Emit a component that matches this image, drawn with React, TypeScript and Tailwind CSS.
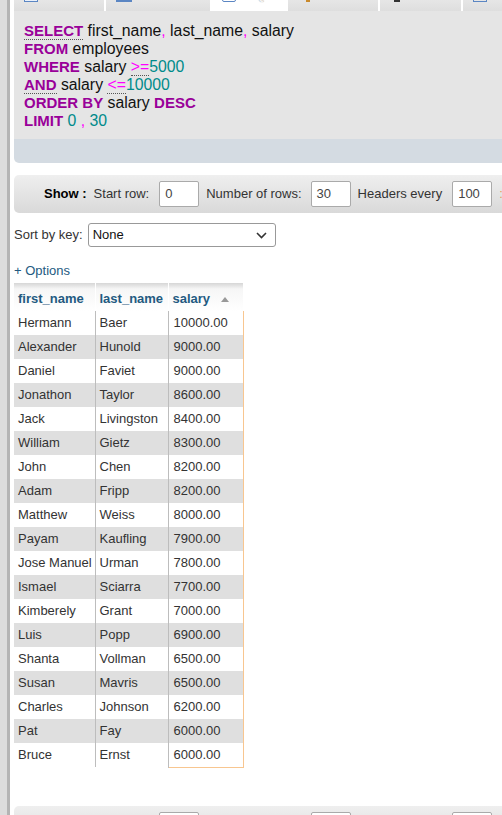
import React from "react";

const rows: [string, string, string][] = [
  ["Hermann", "Baer", "10000.00"],
  ["Alexander", "Hunold", "9000.00"],
  ["Daniel", "Faviet", "9000.00"],
  ["Jonathon", "Taylor", "8600.00"],
  ["Jack", "Livingston", "8400.00"],
  ["William", "Gietz", "8300.00"],
  ["John", "Chen", "8200.00"],
  ["Adam", "Fripp", "8200.00"],
  ["Matthew", "Weiss", "8000.00"],
  ["Payam", "Kaufling", "7900.00"],
  ["Jose Manuel", "Urman", "7800.00"],
  ["Ismael", "Sciarra", "7700.00"],
  ["Kimberely", "Grant", "7000.00"],
  ["Luis", "Popp", "6900.00"],
  ["Shanta", "Vollman", "6500.00"],
  ["Susan", "Mavris", "6500.00"],
  ["Charles", "Johnson", "6200.00"],
  ["Pat", "Fay", "6000.00"],
  ["Bruce", "Ernst", "6000.00"],
];

const Kw = ({ children, u }: { children: React.ReactNode; u?: boolean }) => (
  <span className={"font-bold text-[15px] text-[#990099]" + (u ? " border-b border-dotted border-[#555]" : "")}>{children}</span>
);
const P = ({ children }: { children: React.ReactNode }) => <span className="text-[#ff00ff]">{children}</span>;
const Op = ({ children }: { children: React.ReactNode }) => (
  <span className="text-[#ff00ff] border-b border-dotted border-[#555]">{children}</span>
);
const N = ({ children }: { children: React.ReactNode }) => <span className="text-[#008b8b]">{children}</span>;

function Tab({ w, active, icon, label }: { w: string; active?: boolean; icon: React.ReactNode; label: string }) {
  return (
    <div
      className={
        "h-[30px] flex items-end pb-[9px] pl-[10px] gap-[10px] rounded-t-[4px] " +
        w +
        (active ? " bg-white" : " bg-gradient-to-b from-[#f4f4f4] to-[#dedede]")
      }
    >
      {icon}
      <span className="text-[13px] font-bold text-[#f2f2f2] leading-[14px] [text-shadow:0_0_1px_#888]">{label}</span>
    </div>
  );
}

function ShowBar() {
  return (
    <div className="h-[38px] rounded-[5px] bg-gradient-to-b from-[#efefef] to-[#d9d9d9] flex items-center pl-[30px] text-[13px] text-[#333] whitespace-nowrap w-[520px]">
      <span className="font-bold text-black">Show :</span>
      <span className="ml-[7px]">Start row:</span>
      <div className="ml-[10px] w-[40px] h-[26px] bg-white border border-[#aaa] rounded-[2px] flex items-center pl-[5px] text-[#444]">0</div>
      <span className="ml-[7px]">Number of rows:</span>
      <div className="ml-[9px] w-[40px] h-[26px] bg-white border border-[#aaa] rounded-[2px] flex items-center pl-[5px] text-[#444]">30</div>
      <span className="ml-[7px]">Headers every</span>
      <div className="ml-[10px] w-[40px] h-[26px] bg-white border border-[#aaa] rounded-[2px] flex items-center pl-[5px] text-[#444]">100</div>
      <span className="ml-[7px] text-[#e8a060]">:</span>
    </div>
  );
}

export default function App() {
  return (
    <div className="w-[502px] h-[815px] overflow-hidden flex bg-white" style={{ fontFamily: '"Liberation Sans", Arial, sans-serif' }}>
      <div className="w-[7px] shrink-0 bg-[#dcdcdc]" />
      <div className="w-[3px] shrink-0 bg-[#b4b4b4]" />
      <div className="pl-[4px] flex-1 min-w-0">
        {/* tabs */}
        <div className="h-[11px] overflow-hidden">
          <div className="-mt-[19px] flex gap-[2px] w-[560px]">
            <Tab
              w="w-[90px]"
              label="Browse"
              icon={<div className="w-[14px] h-[12px] border-[1.5px] border-[#5b86c3] bg-[#eaf1fb] shrink-0" />}
            />
            <Tab
              w="w-[104px]"
              label="Structure"
              icon={<div className="w-[16px] h-[12px] border-x-[2px] border-b-[2px] border-[#5b86c3] shrink-0" />}
            />
            <Tab
              w="w-[74px]"
              active
              label="SQL"
              icon={<div className="w-[14px] h-[12px] border-[1.5px] border-[#5b86c3] rounded-[2px] shrink-0" />}
            />
            <Tab w="w-[90px]" label="Search" icon={<div className="w-[4px] h-[12px] bg-[#c98a2c] ml-[8px] shrink-0" />} />
            <Tab w="w-[81px]" label="Insert" icon={<div className="w-[6px] h-[12px] border-r-[2px] border-b-[2px] border-[#333] ml-[4px] shrink-0" />} />
            <Tab
              w="w-[90px]"
              label="Export"
              icon={<div className="w-[14px] h-[12px] border-[1.5px] border-[#5b86c3] shrink-0" />}
            />
          </div>
        </div>

        {/* SQL box */}
        <div className="w-[520px] rounded-bl-[5px] overflow-hidden">
          <div className="bg-[#e5e5e5] pt-[11px] pb-[9px] pl-[10px] text-[15.8px] leading-[18px] text-[#111]">
            <div>
              <Kw u>SELECT</Kw> first_name<P>,</P> last_name<P>,</P> salary
            </div>
            <div>
              <Kw>FROM</Kw> employees
            </div>
            <div>
              <Kw>WHERE</Kw> salary <Op>&gt;=</Op>
              <N>5000</N>
            </div>
            <div>
              <Kw u>AND</Kw> salary <Op>&lt;=</Op>
              <N>10000</N>
            </div>
            <div>
              <Kw>ORDER BY</Kw> salary <Kw>DESC</Kw>
            </div>
            <div>
              <Kw>LIMIT</Kw> <N>0</N> <P>,</P> <N>30</N>
            </div>
          </div>
          <div className="h-[24px] bg-[#d4dbe2]" />
        </div>

        <div className="mt-[12px]">
          <ShowBar />
        </div>

        {/* Sort by key */}
        <div className="mt-[10px] flex items-center text-[13px] text-[#333]">
          <span>Sort by key:</span>
          <div className="ml-[5px] w-[188px] h-[24px] bg-white border border-[#999] rounded-[3px] flex items-center justify-between pl-[4px] pr-[8px] text-[#111]">
            <span>None</span>
            <svg width="11" height="7" viewBox="0 0 11 7">
              <path d="M1 1 L5.5 5.5 L10 1" stroke="#333" strokeWidth="1.6" fill="none" />
            </svg>
          </div>
        </div>

        <div className="mt-[16px] text-[13px] leading-[16px] text-[#235a81]">+ Options</div>

        {/* Table */}
        <table className="mt-[4px] border-collapse table-fixed text-[13px] text-[#333]" style={{ width: 229 }}>
          <colgroup>
            <col style={{ width: 81 }} />
            <col style={{ width: 73 }} />
            <col style={{ width: 75 }} />
          </colgroup>
          <thead>
            <tr className="h-[28px] bg-[linear-gradient(to_bottom,#d6d6d6_0px,#f6f6f6_6px,#ffffff_100%)]">
              <th className="text-left font-bold text-[#235a81] pl-[4px] pt-[4px] border-r border-white">first_name</th>
              <th className="text-left font-bold text-[#235a81] pl-[4px] pt-[4px] border-r border-white">last_name</th>
              <th className="text-left font-bold text-[#235a81] pl-[4px] pt-[4px]">
                <span>salary</span>
                <span className="ml-[11px] inline-block align-middle w-0 h-0 border-l-[4px] border-r-[4px] border-b-[5px] border-l-transparent border-r-transparent border-b-[#999]" />
              </th>
            </tr>
          </thead>
          <tbody>
            {rows.map((r, i) => (
              <tr key={i} className={"h-[24px] " + (i % 2 === 1 ? "bg-[#dfdfdf]" : "bg-white")}>
                <td className="pl-[4px] border-r border-[#bdbdbd] whitespace-nowrap">{r[0]}</td>
                <td className="pl-[4px] border-r border-[#bdbdbd] whitespace-nowrap">{r[1]}</td>
                <td className={"pl-[5px] border-r border-[#f8c690] whitespace-nowrap" + (i === rows.length - 1 ? " border-b" : "")}>{r[2]}</td>
              </tr>
            ))}
          </tbody>
        </table>

        <div className="mt-[38px]">
          <ShowBar />
        </div>
      </div>
    </div>
  );
}
